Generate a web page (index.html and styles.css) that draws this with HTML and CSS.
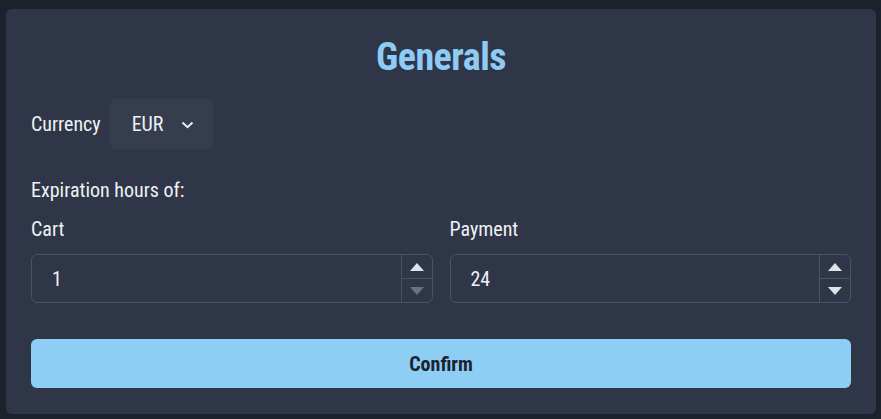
FILE: index.html
```html
<!DOCTYPE html>
<html>
<head>
<meta charset="utf-8">
<link rel="stylesheet" href="styles.css">
</head>
<body>
<div class="card">
  <h1 class="title">Generals</h1>
  <div class="currency-row">
    <span class="label">Currency</span>
    <div class="select">
      <span>EUR</span>
      <svg class="chev" width="13" height="8" viewBox="0 0 13 8"><path d="M1.5 1.5 L6.5 6.2 L11.5 1.5" fill="none" stroke="#e8ecf2" stroke-width="2"/></svg>
    </div>
  </div>
  <div class="label section">Expiration hours of:</div>
  <div class="grid">
    <div class="field">
      <div class="label">Cart</div>
      <div class="input">
        <span class="value">1</span>
        <div class="spin">
          <div class="spin-btn"><svg width="16" height="10" viewBox="0 0 16 10"><path d="M8 1 L15 9 L1 9 Z" fill="#dfe3ea"/></svg></div>
          <div class="spin-btn"><svg width="16" height="10" viewBox="0 0 16 10"><path d="M1 1 L15 1 L8 9 Z" fill="#6a7281"/></svg></div>
        </div>
      </div>
    </div>
    <div class="field">
      <div class="label">Payment</div>
      <div class="input">
        <span class="value">24</span>
        <div class="spin">
          <div class="spin-btn"><svg width="16" height="10" viewBox="0 0 16 10"><path d="M8 1 L15 9 L1 9 Z" fill="#dfe3ea"/></svg></div>
          <div class="spin-btn"><svg width="16" height="10" viewBox="0 0 16 10"><path d="M1 1 L15 1 L8 9 Z" fill="#dfe3ea"/></svg></div>
        </div>
      </div>
    </div>
  </div>
  <button class="confirm">Confirm</button>
</div>
</body>
</html>
```
FILE: styles.css
```css
html, body {
  margin: 0;
  padding: 0;
}
body {
  background: #1c212c;
  font-family: "Roboto Condensed", "Roboto", "Liberation Sans", sans-serif;
  font-stretch: condensed;
  color: #eef1f5;
  padding: 9px 5px 5px 6px;
  height: 419px;
  box-sizing: border-box;
}
.card {
  background: #2e3647;
  border-radius: 6px;
  height: 405px;
  box-sizing: border-box;
  padding: 29px 25px 0 25px;
}
.title {
  margin: 0;
  text-align: center;
  color: #8ecbf5;
  font-size: 38px;
  font-weight: 700;
  line-height: 38px;
  height: 38px;
  letter-spacing: -0.5px;
}
.currency-row {
  display: flex;
  align-items: center;
  margin-top: 23px;
  gap: 9px;
}
.label {
  font-size: 20px;
  line-height: 22px;
  color: #eef1f5;
}
.select {
  width: 103px;
  height: 50px;
  background: #353d4e;
  border-radius: 6px;
  box-sizing: border-box;
  display: flex;
  align-items: center;
  padding-left: 22px;
  font-size: 20px;
  gap: 18px;
}
.chev { margin-top: 2px; }
.section {
  margin-top: 30px;
}
.grid {
  display: grid;
  grid-template-columns: 1fr 1fr;
  gap: 17px;
  margin-top: 17px;
}
.field .label {
  margin-bottom: 14px;
}
.input {
  height: 49px;
  border: 1px solid #4a5366;
  border-radius: 6px;
  box-sizing: border-box;
  display: flex;
  align-items: center;
}
.value {
  flex: 1;
  padding-left: 20px;
  font-size: 20px;
}
.spin {
  width: 30px;
  height: 100%;
  border-left: 1px solid #4a5366;
  display: flex;
  flex-direction: column;
}
.spin-btn {
  flex: 1;
  display: flex;
  align-items: center;
  justify-content: center;
}
.spin-btn + .spin-btn {
  border-top: 1px solid #4a5366;
}
.confirm {
  display: block;
  width: 100%;
  margin-top: 36px;
  height: 49px;
  border: none;
  border-radius: 6px;
  background: #8ecdf4;
  color: #1d2230;
  font-family: inherit;
  font-stretch: condensed;
  font-size: 20px;
  font-weight: 700;
}
```
